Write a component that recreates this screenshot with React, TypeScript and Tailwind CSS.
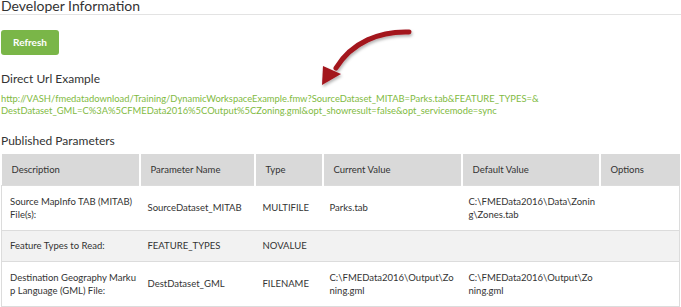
import React from "react";

type Row = {
  desc: string[];
  name: string;
  type: string;
  current: string[];
  def: string[];
};

const rows: Row[] = [
  {
    desc: ["Source MapInfo TAB (MITAB)", "File(s):"],
    name: "SourceDataset_MITAB",
    type: "MULTIFILE",
    current: ["Parks.tab"],
    def: ["C:\\FMEData2016\\Data\\Zonin", "g\\Zones.tab"],
  },
  {
    desc: ["Feature Types to Read:"],
    name: "FEATURE_TYPES",
    type: "NOVALUE",
    current: [],
    def: [],
  },
  {
    desc: ["Destination Geography Marku", "p Language (GML) File:"],
    name: "DestDataset_GML",
    type: "FILENAME",
    current: ["C:\\FMEData2016\\Output\\Zo", "ning.gml"],
    def: ["C:\\FMEData2016\\Output\\Zo", "ning.gml"],
  },
];

function Lines({ lines }: { lines: string[] }) {
  return (
    <>
      {lines.map((l) => (
        <div key={l} className="whitespace-nowrap">
          {l}
        </div>
      ))}
    </>
  );
}

export default function App() {
  return (
    <div
      className="relative h-[307px] w-[681px] overflow-hidden bg-white text-[#333]"
      style={{ fontFamily: "Lato, 'Liberation Sans', sans-serif" }}
    >
      {/* curved pointer arrow */}
      <svg
        className="absolute left-[310px] top-[22px]"
        width="110"
        height="72"
        viewBox="0 0 110 72"
      >
        <defs>
          <filter id="sh" x="-20%" y="-20%" width="140%" height="140%">
            <feDropShadow dx="1" dy="2" stdDeviation="1.5" floodColor="#000" floodOpacity="0.3" />
          </filter>
        </defs>
        <g filter="url(#sh)">
          <path
            d="M99 10 C70 9 42 20 26 46"
            stroke="#a3141f"
            strokeWidth="5"
            strokeLinecap="round"
            fill="none"
          />
          <path d="M12 63 L13 44 L31 52 Z" fill="#a3141f" />
        </g>
      </svg>

      <div className="-mt-[3px] pl-[1px] text-[14px] leading-[18px]">Developer Information</div>
      <div className="mt-[-1px] h-px w-full bg-[#e3e3e3]" />

      <button className="ml-[1px] mt-[15px] h-[25px] w-[58px] rounded-[3px] bg-[#7ab648] text-[10px] font-bold text-white">
        Refresh
      </button>

      <div className="mt-[16px] pl-[1px] text-[12px] leading-[16px]">Direct Url Example</div>
      <div className="mt-[6px] pl-[1px] text-[9.4px] leading-[12px] text-[#7fba42]">
        http://VASH/fmedatadownload/Training/DynamicWorkspaceExample.fmw?SourceDataset_MITAB=Parks.tab&amp;FEATURE_TYPES=&amp;
        <br />
        DestDataset_GML=C%3A%5CFMEData2016%5COutput%5CZoning.gml&amp;opt_showresult=false&amp;opt_servicemode=sync
      </div>

      <div className="mt-[16px] pl-[1px] text-[12px] leading-[16px]">Published Parameters</div>

      <table className="ml-[1px] mt-[5px] w-[679px] table-fixed border-collapse text-[9.5px] leading-[13px]">
        <colgroup>
          <col className="w-[138px]" />
          <col className="w-[115px]" />
          <col className="w-[68px]" />
          <col className="w-[139px]" />
          <col className="w-[138px]" />
          <col />
        </colgroup>
        <thead>
          <tr className="h-[31px] bg-[#d9d9d9]">
            {["Description", "Parameter Name", "Type", "Current Value", "Default Value", "Options"].map(
              (h, i) => (
                <th
                  key={h}
                  className={`px-[10px] text-left align-middle text-[9.5px] font-normal ${
                    i < 5 ? "border-r-2 border-white" : ""
                  }`}
                >
                  {h}
                </th>
              )
            )}
          </tr>
        </thead>
        <tbody>
          {rows.map((r, i) => (
            <tr
              key={r.name}
              className={`border border-[#dcdcdc] ${i === 1 ? "h-[31px] bg-[#f2f2f2]" : "h-[45px] bg-white"}`}
            >
              <td className="pl-[8px] align-middle">
                <Lines lines={r.desc} />
              </td>
              <td className="px-[8px] align-middle">{r.name}</td>
              <td className="px-[8px] align-middle">{r.type}</td>
              <td className="pl-[7px] align-middle">
                <Lines lines={r.current} />
              </td>
              <td className="pl-[7px] align-middle">
                <Lines lines={r.def} />
              </td>
              <td className="px-[10px] align-middle" />
            </tr>
          ))}
        </tbody>
      </table>
    </div>
  );
}
